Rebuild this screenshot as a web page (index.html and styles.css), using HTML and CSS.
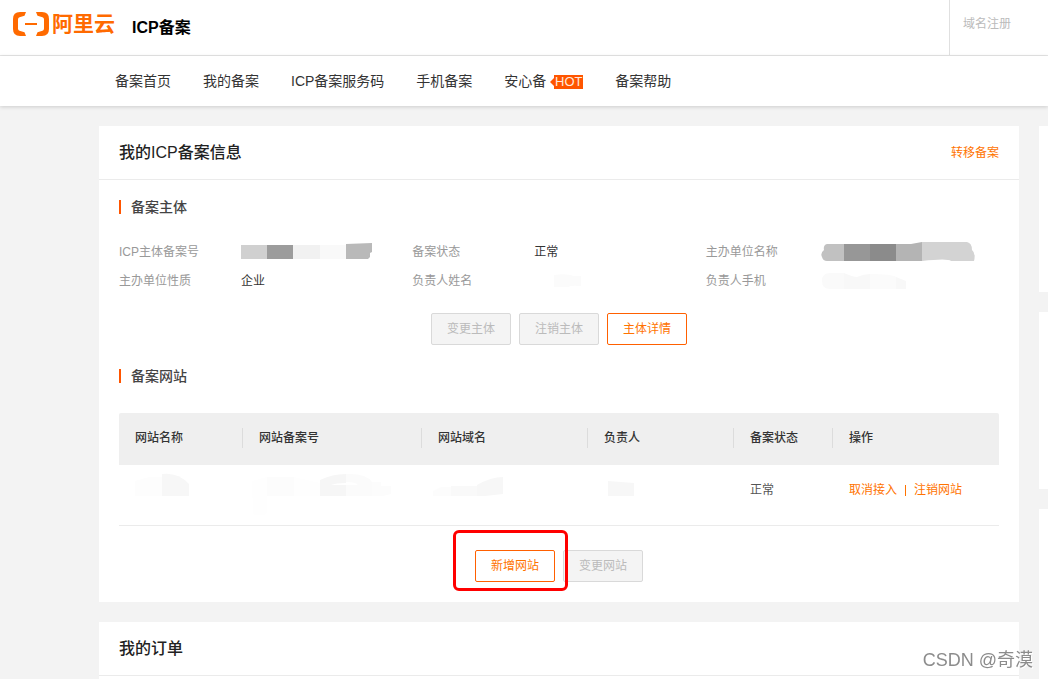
FILE: index.html
```html
<!DOCTYPE html>
<html lang="zh-CN">
<head>
<meta charset="utf-8">
<meta name="viewport" content="width=device-width, initial-scale=1">
<title>ICP备案</title>
<link rel="stylesheet" href="styles.css">
</head>
<body>
<header class="topbar">
  <a class="logo" href="#">
    <svg class="logo-mark" viewBox="0 0 36 24" aria-hidden="true">
      <path d="M13 0H7Q0 0 0 7v10q0 7 7 7h6l-1.500-3.800-5-1.400Q5 18.300 5 16.500v-9Q5 5.700 6.500 5.200l5-1.400zM23 0h6q7 0 7 7v10q0 7-7 7h-6l1.500-3.800 5-1.400q1.500-.5 1.500-2.300v-9q0-1.800-1.500-2.300l-5-1.400zM12 11h12v2H12z"/>
    </svg>
    <span class="logo-text">阿里云</span>
  </a>
  <h1 class="product">ICP备案</h1>
  <a class="register" href="#">域名注册</a>
</header>
<nav class="nav">
  <a href="#">备案首页</a>
  <a href="#">我的备案</a>
  <a href="#">ICP备案服务码</a>
  <a href="#">手机备案</a>
  <a class="with-badge" href="#">安心备<span class="badge">HOT</span></a>
  <a href="#">备案帮助</a>
</nav>
<div class="page">
  <main class="main">
    <section class="card">
      <div class="card-head">
        <h2>我的ICP备案信息</h2>
        <a class="link" href="#">转移备案</a>
      </div>
      <div class="card-body">
        <h3>备案主体</h3>
        <dl class="info">
          <div class="field"><dt>ICP主体备案号</dt><dd>
            <svg class="mask mask-number" viewBox="0 0 132 18" aria-hidden="true">
              <path fill="#d0d0d0" d="M0 2h26v14H0z"/><path fill="#9c9c9c" d="M26 2h26v14H26z"/><path fill="#f1f1f1" d="M52 2h27v14H52z"/><path fill="#f9f9f9" d="M79 2h26v14H79z"/><path fill="#b9b9b9" d="M105 1l26-1v9l-2 1v4l-2 2h-22z"/>
            </svg></dd></div>
          <div class="field"><dt>备案状态</dt><dd>正常</dd></div>
          <div class="field offset"><dt>主办单位名称</dt><dd>
            <svg class="mask mask-name" viewBox="0 0 154 20" aria-hidden="true">
              <path fill="#c1c1c1" d="M23 2H6Q2 3 3 8-1 11 1 15q1 4 5 4h17z"/><path fill="#979797" d="M23 2h26v17H23z"/><path fill="#8b8b8b" d="M49 2h26v17H49z"/><path fill="#b4b4b4" d="M75 2h15l11-2v19H75z"/><path fill="#d3d3d3" d="M101 0h45q5 1 5 8 4 3 2 11h-23q-3-3-29 0z"/>
            </svg></dd></div>
          <div class="field"><dt>主办单位性质</dt><dd>企业</dd></div>
          <div class="field"><dt>负责人姓名</dt><dd>
            <svg class="mask mask-person" viewBox="0 0 50 14" aria-hidden="true">
              <path fill="#fbfbfb" d="M20 1q12-2 20 1h7v10q-10-1-13 1H20z"/>
            </svg></dd></div>
          <div class="field offset"><dt>负责人手机</dt><dd>
            <svg class="mask mask-phone" viewBox="0 0 86 20" aria-hidden="true">
              <path fill="#fafafa" d="M9 2h14v16H9q-8 0-8-8t8-8z"/><path fill="#f8f8f8" d="M23 2q9 4 13 4 7-3 13-3v15H23z"/><path fill="#fbfbfb" d="M49 3q22 0 26 3v12H49z"/><path fill="#f8f8f8" d="M75 6l10 4v8H75z"/>
            </svg></dd></div>
        </dl>
        <div class="actions">
          <button class="btn" type="button" disabled>变更主体</button>
          <button class="btn" type="button" disabled>注销主体</button>
          <button class="btn primary" type="button">主体详情</button>
        </div>
        <h3>备案网站</h3>
        <table class="sites">
          <colgroup><col class="c-name"><col class="c-number"><col class="c-domain"><col class="c-owner"><col class="c-status"><col></colgroup>
          <thead>
            <tr><th scope="col">网站名称</th><th scope="col">网站备案号</th><th scope="col">网站域名</th><th scope="col">负责人</th><th scope="col">备案状态</th><th scope="col">操作</th></tr>
          </thead>
          <tbody>
            <tr>
              <td class="masked"><svg class="cell-mask" viewBox="0 0 124 42" aria-hidden="true"><path fill="#fdfdfd" d="M16 8l14-4h13v19H16z"/><path fill="#f7f7f7" d="M43 1q16-2 27 10v12H43z"/></svg></td>
              <td class="masked"><svg class="cell-mask wide" viewBox="0 0 160 42" aria-hidden="true"><path fill="#fefefe" d="M9 8l15-4v36q-6 5-14 1zM51 4l26 6v13H51z"/><path fill="#fcfcfc" d="M24 4h27v19H24zM129 9h9v4h10v8l-8 2h-11z"/><path fill="#f6f6f6" d="M77 7q12-6 26-6v9q-10 0-15 2h15v11H77z"/><path fill="#fbfbfb" d="M103 1q20-1 26 8v14h-26V12h12q-2-3-12-3z"/></svg></td>
              <td class="masked"><svg class="cell-mask wide" viewBox="0 0 160 42" aria-hidden="true"><path fill="#fcfcfc" d="M11 18l8-4h10v9H11z"/><path fill="#f9f9f9" d="M29 13h26v10H29z"/><path fill="#f7f7f7" d="M55 12q14-8 26-8v17l-18 2h-8z"/></svg></td>
              <td class="masked"><svg class="cell-mask" viewBox="0 0 124 42" aria-hidden="true"><path fill="#f7f7f7" d="M20 8l13 1 13 1v13H20z"/></svg></td>
              <td>正常</td>
              <td><div class="row-links"><a class="link" href="#">取消接入</a><span class="divider"></span><a class="link" href="#">注销网站</a></div></td>
            </tr>
          </tbody>
        </table>
        <div class="actions site-actions">
          <div class="highlight"><button class="btn primary" type="button">新增网站</button></div>
          <button class="btn" type="button" disabled>变更网站</button>
        </div>
      </div>
    </section>
    <section class="card orders">
      <div class="card-head"><h2>我的订单</h2></div>
    </section>
  </main>
  <aside class="side">
    <div class="side-card first"></div>
    <div class="side-card"></div>
    <div class="side-card rest"></div>
  </aside>
</div>
<div class="watermark">CSDN @奇漠</div>
</body>
</html>
```

FILE: styles.css
```css
* { box-sizing: border-box; }

html, body { height: 100%; }

body {
  margin: 0;
  overflow: hidden;
  background: #f3f3f3;
  color: #333;
  font: 12px/20px "Liberation Sans", "Noto Sans CJK SC", sans-serif;
  display: flex;
  flex-direction: column;
}

a { color: inherit; text-decoration: none; }
h1, h2, h3, dl, dd { margin: 0; }

.topbar {
  flex: none;
  display: flex;
  height: 56px;
  padding-left: 13px;
  background: #fff;
  border-bottom: 1px solid #e6e6e6;
}
.logo {
  display: flex;
  align-items: center;
  gap: 3px;
  height: 48px;
  color: #ff6a00;
}
.logo-mark { width: 36px; height: 24px; fill: #ff6a00; }
.logo-text { font-size: 21px; font-weight: 700; line-height: 24px; }
.product {
  margin-left: 17px;
  color: #000;
  font-size: 16px;
  font-weight: 700;
  line-height: 56px;
}
.register {
  width: 99px;
  margin-left: auto;
  padding-left: 13px;
  border-left: 1px solid #e0e0e0;
  color: #bbb;
  line-height: 48px;
}

.nav {
  position: relative;
  flex: none;
  display: flex;
  gap: 32px;
  height: 50px;
  padding-left: 115px;
  background: #fff;
  box-shadow: 0 1px 4px rgba(0, 0, 0, 0.16);
  font-size: 14px;
  line-height: 50px;
  white-space: nowrap;
}
.with-badge { display: flex; align-items: center; gap: 8px; }
.badge {
  position: relative;
  width: 29px;
  height: 14px;
  margin-top: 2px;
  background: #ff5500;
  color: #ffe9dc;
  font-size: 13px;
  line-height: 14px;
  text-align: center;
}
.badge::before {
  content: "";
  position: absolute;
  left: -4px;
  top: 3px;
  border: 4px solid transparent;
  border-left: 0;
  border-right-color: #ff5500;
}

.page {
  flex: 1;
  min-height: 0;
  display: grid;
  grid-template-columns: 1fr 9px;
  gap: 20px;
  padding: 20px 0 0 99px;
}
.main, .side { display: flex; flex-direction: column; gap: 20px; }
.card, .side-card { background: #fff; }
.side-card { height: 177px; }
.side-card.first { height: 166px; }
.side-card.rest { flex: 1; }
.orders { flex: 1; }

.card-head {
  display: flex;
  align-items: center;
  justify-content: space-between;
  height: 54px;
  padding: 0 20px;
  border-bottom: 1px solid #ebebeb;
}
.card-head h2 { color: #222; font-size: 16px; font-weight: 500; line-height: 24px; }
.card-body { padding: 17px 20px 20px; }
.link { color: #ff7300; }

h3 {
  display: flex;
  align-items: center;
  gap: 10px;
  color: #444;
  font-size: 14px;
  font-weight: 500;
  line-height: 20px;
}
h3::before { content: ""; width: 2px; height: 14px; background: #ff5500; }

.info {
  display: grid;
  grid-template-columns: repeat(3, 1fr);
  margin: 20px 0 18px;
}
.field { display: flex; align-items: center; height: 29px; }
.field dt { width: 122px; color: #999; }
.field.offset dt { width: 115px; }
.mask { display: block; }
.mask-number { width: 132px; height: 18px; }
.mask-name { width: 154px; height: 20px; }
.mask-person { width: 50px; height: 14px; }
.mask-phone { width: 86px; height: 20px; }

.actions {
  display: flex;
  justify-content: center;
  gap: 8px;
  margin-bottom: 21px;
}
.btn {
  width: 80px;
  height: 32px;
  padding: 0;
  border: 1px solid #d9d9d9;
  border-radius: 2px;
  background: #f4f4f4;
  color: #bbb;
  font: inherit;
}
.btn.primary { border-color: #ff6000; background: #fff; color: #ff7300; }
.site-actions { margin: 24px 0 0; }
.highlight { position: relative; }
.highlight::after {
  content: "";
  position: absolute;
  inset: -20px -13px -9px -22px;
  border: 3px solid #f00;
  border-radius: 6px;
  pointer-events: none;
}

.sites {
  width: 100%;
  margin-top: 27px;
  border-collapse: separate;
  border-spacing: 0;
  table-layout: fixed;
}
.c-name { width: 124px; }
.c-number { width: 179px; }
.c-domain { width: 166px; }
.c-owner { width: 146px; }
.c-status { width: 99px; }
.sites th {
  height: 52px;
  padding: 0 16px 2px;
  background: #efefef linear-gradient(#dcdcdc, #dcdcdc) right 15px / 1px 20px no-repeat;
  font-weight: 500;
  text-align: left;
}
.sites th:first-child { border-top-left-radius: 2px; }
.sites th:last-child { background-image: none; border-top-right-radius: 2px; }
.sites td {
  height: 61px;
  padding: 15px 16px 0;
  border-bottom: 1px solid #ebebeb;
  color: #555;
  vertical-align: top;
}
.sites td.masked { padding: 8px 0 0; }
.cell-mask { display: block; width: 124px; height: 42px; }
.cell-mask.wide { width: 160px; }
.row-links { display: flex; align-items: center; gap: 8px; }
.divider { width: 1px; height: 11px; background: #ff7300; }

.watermark {
  position: fixed;
  right: 15px;
  bottom: 6px;
  color: #8c8c8c;
  font: 18px/26px "Liberation Sans", "Noto Sans CJK SC", sans-serif;
  text-shadow: 1px 1px 0 #fff;
}
```
